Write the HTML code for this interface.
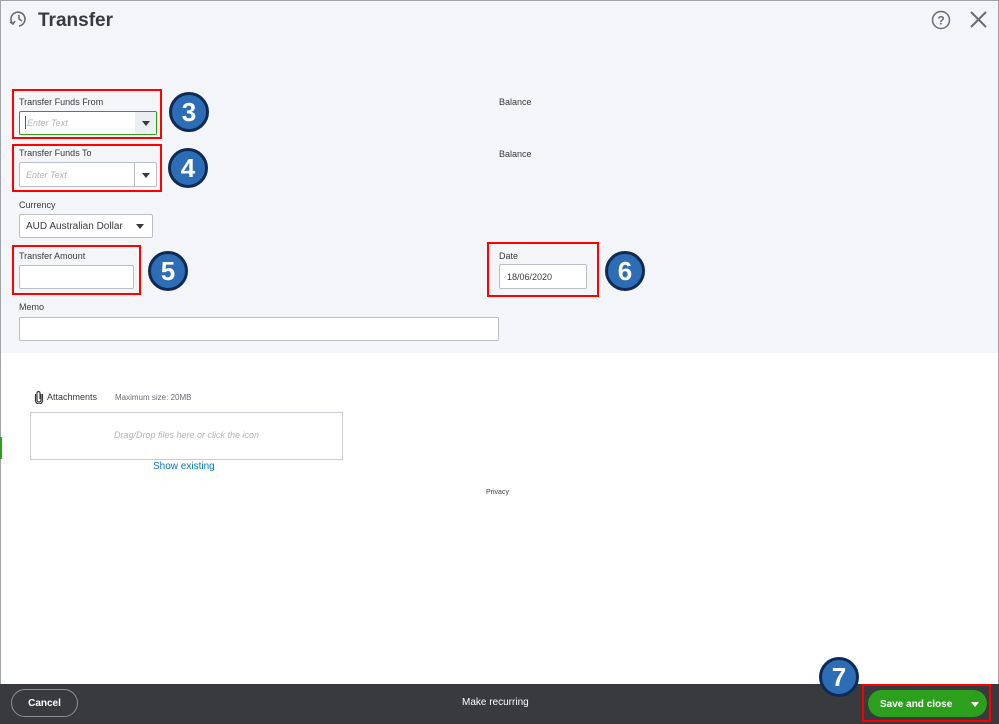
<!DOCTYPE html>
<html><head><meta charset="utf-8"><style>
*{box-sizing:border-box;margin:0;padding:0}
body{width:999px;height:724px;overflow:hidden;background:#fff;font-family:"Liberation Sans",sans-serif;color:#393a3d;position:relative}
.abs{position:absolute}
.top{left:0;top:0;width:999px;height:353px;background:#f4f5f8}
.lbl{font-size:9px;color:#393a3d}
.inp{background:#fff;border:1px solid #babec5;border-radius:2px}
.ph{font-size:9px;color:#b0b3b8;font-style:italic}
.red{border:2px solid #f00}
.num{width:40px;height:40px;border-radius:50%;background:#2d6db5;border:3px solid #0f2a55;color:#fff;font-weight:bold;font-size:26px;text-align:center;line-height:34px}
.tri{width:0;height:0;border-left:4px solid transparent;border-right:4px solid transparent;border-top:5px solid #393a3d}
</style></head><body>
<div class="abs top"></div>
<div class="abs" style="left:0;top:0;width:1px;height:684px;background:#a0a3a8"></div>
<div class="abs" style="left:0;top:0;width:999px;height:1px;background:#a0a3a8"></div>
<div class="abs" style="left:998px;top:0;width:1px;height:684px;background:#a0a3a8"></div>
<svg class="abs" style="left:9px;top:9px" width="20" height="20" viewBox="0 0 20 20" fill="none" stroke="#6b6c72" stroke-width="1.6"><path d="M4 15 A7 7 0 1 1 10 17" /><path d="M10 6v4l3 2"/><path d="M1 13l3 2 2-3"/></svg>
<div class="abs" style="left:38px;top:10px;font-size:19px;font-weight:bold;color:#393a3d">Transfer</div>
<svg class="abs" style="left:931px;top:10px" width="20" height="20" viewBox="0 0 20 20"><circle cx="10" cy="10" r="8.5" fill="none" stroke="#6b6c72" stroke-width="1.5"/><text x="10" y="14.5" font-size="12" font-family="Liberation Sans" font-weight="bold" text-anchor="middle" fill="#6b6c72">?</text></svg>
<svg class="abs" style="left:969px;top:10px" width="19" height="19" viewBox="0 0 19 19" stroke="#6b6c72" stroke-width="2"><path d="M2 2L17 17M17 2L2 17"/></svg>
<div class="abs red" style="left:12px;top:89px;width:150px;height:50px"></div>
<div class="abs lbl" style="left:19px;top:97px">Transfer Funds From</div>
<div class="abs inp" style="left:19px;top:111px;width:138px;height:24px;border-color:#2ca01c"></div>
<div class="abs" style="left:25px;top:116px;width:1px;height:13px;background:#555"></div>
<div class="abs ph" style="left:27px;top:118px">Enter Text</div>
<div class="abs" style="left:135px;top:112px;width:21px;height:22px;background:#eceef1"></div>
<div class="abs tri" style="left:142px;top:121px"></div>
<div class="abs num" style="left:169px;top:92px">3</div>
<div class="abs lbl" style="left:499px;top:97px">Balance</div>
<div class="abs red" style="left:12px;top:144px;width:150px;height:48px"></div>
<div class="abs lbl" style="left:19px;top:148px">Transfer Funds To</div>
<div class="abs inp" style="left:19px;top:162px;width:138px;height:25px"></div>
<div class="abs" style="left:134px;top:163px;width:1px;height:23px;background:#babec5"></div>
<div class="abs ph" style="left:26px;top:170px">Enter Text</div>
<div class="abs tri" style="left:142px;top:173px"></div>
<div class="abs num" style="left:168px;top:148px">4</div>
<div class="abs lbl" style="left:499px;top:149px">Balance</div>
<div class="abs lbl" style="left:19px;top:200px">Currency</div>
<div class="abs inp" style="left:19px;top:214px;width:134px;height:24px"></div>
<div class="abs" style="left:26px;top:221px;font-size:10px;color:#393a3d">AUD Australian Dollar</div>
<div class="abs tri" style="left:136px;top:224px"></div>
<div class="abs red" style="left:12px;top:245px;width:129px;height:50px"></div>
<div class="abs lbl" style="left:19px;top:251px">Transfer Amount</div>
<div class="abs inp" style="left:19px;top:265px;width:115px;height:24px"></div>
<div class="abs num" style="left:148px;top:251px">5</div>
<div class="abs red" style="left:487px;top:242px;width:112px;height:55px"></div>
<div class="abs lbl" style="left:499px;top:251px">Date</div>
<div class="abs inp" style="left:499px;top:264px;width:88px;height:25px"></div>
<div class="abs" style="left:507px;top:272px;font-size:9px;color:#393a3d">18/06/2020</div>
<div class="abs num" style="left:605px;top:251px">6</div>
<div class="abs lbl" style="left:19px;top:302px">Memo</div>
<div class="abs inp" style="left:19px;top:317px;width:480px;height:24px"></div>
<svg class="abs" style="left:34px;top:390px" width="10" height="14" viewBox="0 0 10 14" fill="none" stroke="#393a3d" stroke-width="1.2"><path d="M7 4v6a2 2 0 0 1-4 0V3a1.5 1.5 0 0 1 3 0v6"/><path d="M1.5 4v6.5a3.5 3.5 0 0 0 7 0V4"/></svg>
<div class="abs" style="left:47px;top:392px;font-size:9px;color:#393a3d">Attachments</div>
<div class="abs" style="left:115px;top:393px;font-size:8px;color:#6b6c72">Maximum size: 20MB</div>
<div class="abs" style="left:30px;top:412px;width:313px;height:48px;border:1px solid #c9ccd1;background:#fff"></div>
<div class="abs" style="left:30px;top:430px;width:313px;text-align:center;font-size:9px;font-style:italic;color:#b0b3b8">Drag/Drop files here or click the icon</div>
<div class="abs" style="left:153px;top:461px;font-size:10px;color:#0077c5">Show existing</div>
<div class="abs" style="left:486px;top:489px;font-size:7px;color:#393a3d">Privacy</div>
<div class="abs" style="left:0;top:437px;width:2px;height:22px;background:#2ca01c"></div>
<div class="abs" style="left:0;top:684px;width:999px;height:40px;background:#393a3d"></div>
<div class="abs" style="left:11px;top:689px;width:67px;height:28px;border:1px solid #8d9096;border-radius:14px;color:#fff;font-size:10px;font-weight:bold;text-align:center;line-height:28px">Cancel</div>
<div class="abs" style="left:462px;top:697px;color:#fff;font-size:10px">Make recurring</div>
<div class="abs red" style="left:862px;top:684px;width:129px;height:38px"></div>
<div class="abs" style="left:868px;top:690px;width:119px;height:27px;background:#2ca01c;border-radius:14px"></div>
<div class="abs" style="left:880px;top:699px;color:#fff;font-size:10px;font-weight:bold">Save and close</div>
<div class="abs tri" style="left:971px;top:702px;border-top-color:#fff"></div>
<div class="abs num" style="left:819px;top:657px">7</div>
</body></html>
